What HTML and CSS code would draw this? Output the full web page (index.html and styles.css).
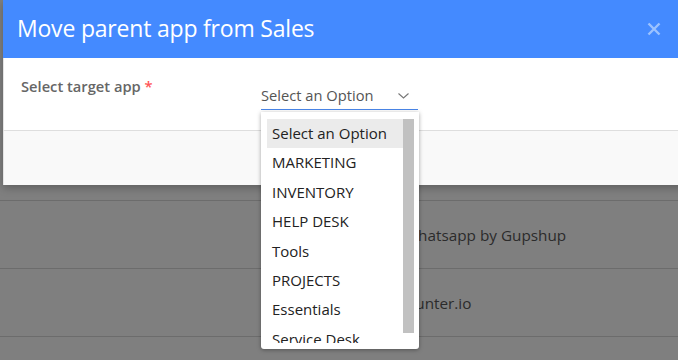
FILE: index.html
```html
<!DOCTYPE html>
<html>
<head>
<meta charset="utf-8">
<link rel="stylesheet" href="styles.css">
</head>
<body>
<div class="page">
  <div class="page-top"></div>
  <div class="row"><span class="row-text">Whatsapp by Gupshup</span></div>
  <div class="row"><span class="row-text">Hunter.io</span></div>
  <div class="row row-last"></div>
</div>

<div class="modal">
  <div class="modal-header">
    <h1 class="modal-title">Move parent app from Sales</h1>
    <span class="modal-close">
      <svg width="14" height="14" viewBox="0 0 14 14"><path d="M1.5 1.5 L12.5 12.5 M12.5 1.5 L1.5 12.5" stroke="#9cc2ff" stroke-width="2.4" stroke-linecap="butt"/></svg>
    </span>
  </div>
  <div class="modal-body">
    <label class="field-label">Select target app <span class="req">*</span></label>
    <div class="select">
      <span class="select-value">Select an Option</span>
      <svg class="chevron" width="11" height="6" viewBox="0 0 11 6"><path d="M0.5 0.5 L5.5 5 L10.5 0.5" fill="none" stroke="#777" stroke-width="1.1"/></svg>
    </div>
  </div>
  <div class="modal-footer"></div>
</div>

<div class="dropdown">
  <ul class="options">
    <li class="option active">Select an Option</li>
    <li class="option">MARKETING</li>
    <li class="option">INVENTORY</li>
    <li class="option">HELP DESK</li>
    <li class="option">Tools</li>
    <li class="option">PROJECTS</li>
    <li class="option">Essentials</li>
    <li class="option">Service Desk</li>
  </ul>
  <div class="scrollbar"><div class="thumb"></div></div>
</div>
</body>
</html>
```
FILE: styles.css
```css
* { box-sizing: border-box; }
html, body {
  margin: 0;
  padding: 0;
  width: 678px;
  height: 360px;
  overflow: hidden;
  background: #7f7f7f;
  font-family: "Open Sans", "Noto Sans", sans-serif;
}
.page {
  display: flex;
  flex-direction: column;
}
.page-top {
  height: 201px;
  border-bottom: 1px solid #6c6c6c;
}
.row {
  height: 68px;
  border-bottom: 1px solid #6c6c6c;
  display: flex;
  align-items: center;
  padding-left: 404px;
}
.row-last {
  height: 20px;
  border-bottom: none;
}
.row-text {
  font-size: 15.3px;
  color: #2b2b2b;
}
.modal {
  position: absolute;
  left: 3px;
  top: 0;
  width: 700px;
  background: #fff;
  box-shadow: 0 3px 8px rgba(0,0,0,0.25);
}
.modal-header {
  height: 58px;
  background: #448aff;
  display: flex;
  align-items: center;
  justify-content: space-between;
  padding: 0 0 3px 14px;
}
.modal-title {
  margin: 0;
  font-size: 23px;
  font-weight: 400;
  color: #fff;
  letter-spacing: -0.2px;
}
.modal-close {
  display: flex;
  margin-right: 42px;
  margin-top: 2px;
}
.modal-body {
  height: 72px;
  display: flex;
  padding: 18px 0 0 17px;
  border-left: 1px solid #e4e4e4;
}
.field-label {
  width: 240px;
  font-size: 14.7px;
  font-weight: 600;
  color: #666;
}
.req { color: #f55; }
.select {
  width: 157px;
  height: 34px;
  border-bottom: 1px solid #4a86e8;
  display: flex;
  align-items: flex-end;
  justify-content: space-between;
  padding: 0 9px 4px 0;
}
.select-value {
  font-size: 14.7px;
  color: #555;
}
.chevron { margin-bottom: 6px; }
.modal-footer {
  height: 55px;
  background: #f9f9f9;
  border-top: 1px solid #dedede;
  border-left: 1px solid #e4e4e4;
}
.dropdown {
  position: absolute;
  left: 261px;
  top: 112px;
  width: 158px;
  height: 237px;
  background: #fff;
  border-radius: 0 0 3px 3px;
  box-shadow: 0 1px 4px rgba(0,0,0,0.35);
  display: flex;
  align-items: flex-start;
  padding: 7px 5px 0 6px;
}
.options {
  list-style: none;
  margin: 0;
  padding: 0;
  flex: 1;
  height: 224px;
  overflow: hidden;
}
.option {
  height: 29.4px;
  line-height: 29.4px;
  padding-left: 5px;
  font-size: 15px;
  color: #222;
  white-space: nowrap;
}
.option.active { background: #ebebeb; }
.scrollbar {
  width: 11px;
}
.thumb {
  height: 214px;
  background: #c1c1c1;
}
```
